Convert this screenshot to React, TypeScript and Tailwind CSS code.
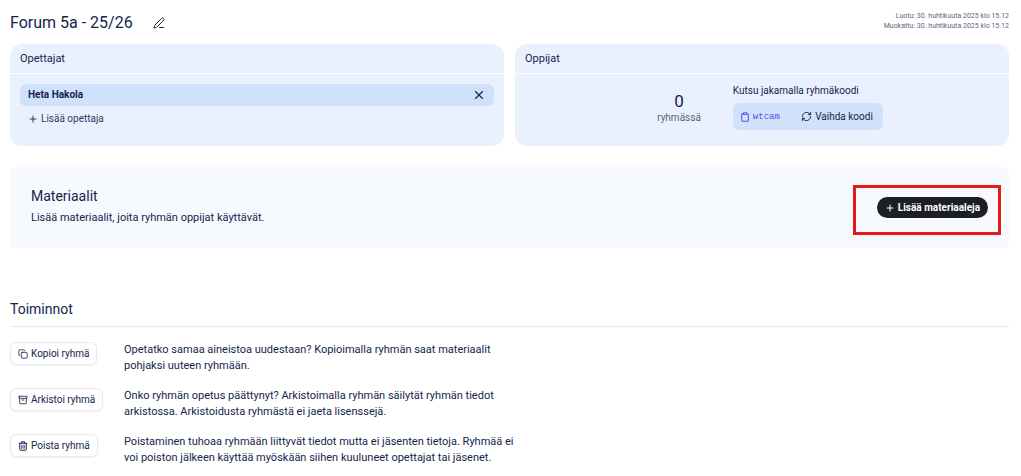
import type { ReactNode } from 'react';
import { Archive, Clipboard, Copy, PenLine, Plus, RefreshCw, X } from 'lucide-react';

function Bin({ size }: { size: number }) {
  return (
    <svg width={size} height={size} viewBox="0 0 20 20" fill="none" stroke="currentColor" strokeWidth="2">
      <path d="M1.5 4.5h17M7 4.5v-3h6v3" />
      <path d="M3.5 4.5v12a2 2 0 0 0 2 2h9a2 2 0 0 0 2-2v-12" />
      <path d="M7.3 7.5v8M10 7.5v8M12.7 7.5v8" strokeWidth="1.4" />
    </svg>
  );
}

const actions = [
  {
    icon: Copy,
    label: 'Kopioi ryhmä',
    lines: ['Opetatko samaa aineistoa uudestaan? Kopioimalla ryhmän saat materiaalit', 'pohjaksi uuteen ryhmään.'],
  },
  {
    icon: Archive,
    label: 'Arkistoi ryhmä',
    lines: ['Onko ryhmän opetus päättynyt? Arkistoimalla ryhmän säilytät ryhmän tiedot', 'arkistossa. Arkistoidusta ryhmästä ei jaeta lisenssejä.'],
  },
  {
    icon: Bin,
    label: 'Poista ryhmä',
    lines: ['Poistaminen tuhoaa ryhmään liittyvät tiedot mutta ei jäsenten tietoja. Ryhmää ei', 'voi poiston jälkeen käyttää myöskään siihen kuuluneet opettajat tai jäsenet.'],
  },
];

function Card({ title, children }: { title: string; children: ReactNode }) {
  return (
    <section className="flex flex-col rounded-xl bg-[#eaf1fe]">
      <h2 className="border-b border-white px-2.5 py-1.5 text-[11px] leading-[17px]">{title}</h2>
      {children}
    </section>
  );
}

export default function App() {
  return (
    <main className="pt-[13px] pr-3 pb-3 pl-2.5 font-['Roboto',sans-serif] text-[11px] leading-4 text-[#13254c]">
      <header className="flex h-[31px] items-start justify-between">
        <div className="flex items-center gap-5">
          <h1 className="text-base leading-5">Forum 5a - 25/26</h1>
          <button type="button" aria-label="Muokkaa nimeä">
            <PenLine size={12} />
          </button>
        </div>
        <div className="-mt-0.5 text-right text-[7px] leading-[10px] text-[#5f6480]">
          <p>Luotu: 30. huhtikuuta 2025 klo 15.12</p>
          <p>Muokattu: 30. huhtikuuta 2025 klo 15.12</p>
        </div>
      </header>

      <div className="grid grid-cols-2 gap-[11px]">
        <Card title="Opettajat">
          <div className="px-2.5 pt-2.5 pb-[18px]">
            <div className="flex h-[22px] items-center justify-between rounded-md bg-[#cfe1fb] px-2">
              <span className="text-[10px] font-bold">Heta Hakola</span>
              <button type="button" aria-label="Poista opettaja">
                <X size={14} />
              </button>
            </div>
            <button type="button" className="mt-1 flex items-center gap-[3px] px-2 text-[10px] leading-[18px] text-[#2e3a5c]">
              <Plus size={10} strokeWidth={2.5} />
              Lisää opettaja
            </button>
          </div>
        </Card>

        <Card title="Oppijat">
          <div className="flex justify-center gap-8 pt-2.5 pl-4">
            <div className="pt-2 text-center">
              <p className="text-[17px] leading-[18px]">0</p>
              <p className="text-[10px] leading-4 text-[#5f6480]">ryhmässä</p>
            </div>
            <div>
              <p className="text-[10px] leading-[14px]">Kutsu jakamalla ryhmäkoodi</p>
              <div className="mt-[5px] flex h-[27px] w-[150px] items-center justify-between rounded-md bg-[#cfe1fb] pr-2.5 pl-[7px]">
                <button type="button" className="flex items-center gap-[3px] font-['Liberation_Mono',monospace] text-[9px] text-[#5b50e8]">
                  <Clipboard size={10} strokeWidth={2.5} />
                  wtcam
                </button>
                <button type="button" className="flex items-center gap-[3px] text-[10px]">
                  <RefreshCw size={11} />
                  Vaihda koodi
                </button>
              </div>
            </div>
          </div>
        </Card>
      </div>

      <section className="mt-[21px] flex items-start justify-between rounded-md bg-[#f6fafe] px-[21px] pt-5 pb-[22px]">
        <div>
          <h2 className="text-sm leading-[19px]">Materiaalit</h2>
          <p className="mt-1">Lisää materiaalit, joita ryhmän oppijat käyttävät.</p>
        </div>
        <div className="relative mt-2.5">
          <button type="button" className="flex h-[21px] items-center gap-[3px] rounded-full bg-[#1d1f25] px-2 text-[10px] font-bold text-white">
            <Plus size={10} strokeWidth={2.5} />
            Lisää materiaaleja
          </button>
          <div className="pointer-events-none absolute -top-3 -right-[13px] -bottom-[17px] -left-6 border-3 border-[#e51b1b]" />
        </div>
      </section>

      <section className="mt-[52px]">
        <h2 className="border-b border-[#e3ebf6] pb-2 text-sm leading-[18px]">Toiminnot</h2>
        <div className="mt-[15px] grid gap-3.5">
          {actions.map(({ icon: Icon, label, lines }) => (
            <div key={label} className="grid grid-cols-[114px_1fr]">
              <div>
                <button type="button" className="flex h-[23px] items-center gap-[3px] rounded-md border border-[#e8eaef] bg-white px-[7px] text-[10px] shadow-xs">
                  <Icon size={10} />
                  {label}
                </button>
              </div>
              <p>
                {lines[0]}
                <br />
                {lines[1]}
              </p>
            </div>
          ))}
        </div>
      </section>
    </main>
  );
}
